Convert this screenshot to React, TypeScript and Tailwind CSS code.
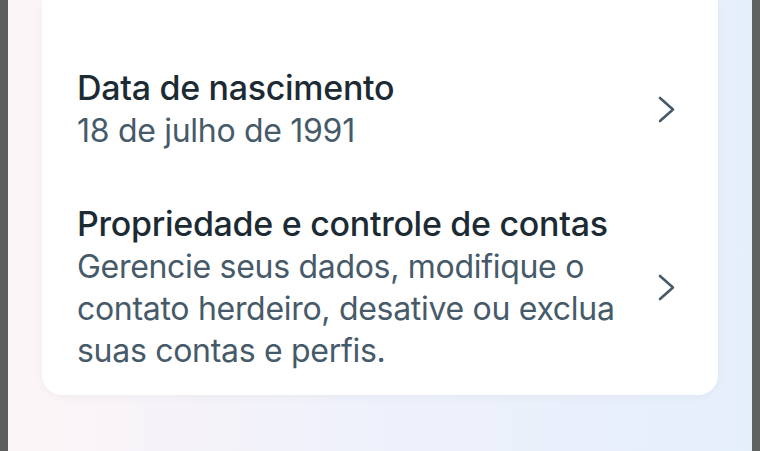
const font = { fontFamily: 'Inter, "Noto Sans", sans-serif' }

function Chevron() {
  return (
    <svg width="18" height="27" viewBox="0 0 18 27" className="shrink-0 text-[#465a69]" fill="none">
      <polyline points="2,2 15,13.5 2,25" stroke="currentColor" strokeWidth="2.6" strokeLinecap="round" strokeLinejoin="round" />
    </svg>
  )
}

function Row({ title, children }: { title: string; children: React.ReactNode }) {
  return (
    <div className="flex items-center justify-between">
      <div className="w-[560px]">
        <div className="text-[34px] leading-[44px] font-medium text-[#1c2b33] tracking-[-0.3px]">{title}</div>
        <div className="text-[32px] leading-[42px] text-[#465a69] tracking-[-0.3px]">{children}</div>
      </div>
      <Chevron />
    </div>
  )
}

export default function App() {
  return (
    <div className="w-[760px] h-[451px] flex overflow-hidden" style={font}>
      <div className="w-[8px] bg-[#5d5d5d]" />
      <div className="flex-1 bg-gradient-to-r from-[#fcf5f7] via-[#eef1fb] to-[#e5effb] px-[34px]">
        <div className="bg-white rounded-b-[20px] shadow-[0_2px_8px_rgba(0,0,0,0.04)] pl-[35px] pr-[42px] pt-[66px] pb-[23px]">
          <Row title="Data de nascimento">18 de julho de 1991</Row>
          <div className="h-[50px]" />
          <Row title="Propriedade e controle de contas">
            Gerencie seus dados, modifique o contato herdeiro, desative ou exclua suas contas e perfis.
          </Row>
        </div>
      </div>
      <div className="w-[8px] bg-[#606161]" />
    </div>
  )
}
